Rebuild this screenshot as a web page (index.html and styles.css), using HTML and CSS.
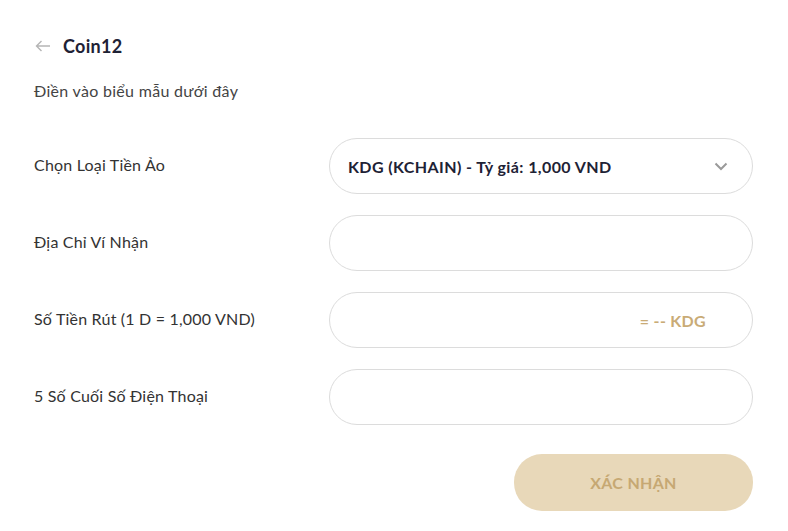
FILE: index.html
```html
<!DOCTYPE html>
<html lang="vi">
<head>
  <meta charset="UTF-8">
  <meta name="viewport" content="width=device-width, initial-scale=1">
  <title>Coin12</title>
  <link rel="stylesheet" href="styles.css">
</head>
<body>
  <div class="page">
    <div class="header">
      <span class="back">
        <svg width="16" height="12" viewBox="0 0 16 12" fill="none" stroke="#b5b5b5" stroke-width="1.4">
          <path d="M15 6H1.5M6.5 1L1.5 6l5 5"/>
        </svg>
      </span>
      <h1>Coin12</h1>
    </div>
    <p class="intro">Điền vào biểu mẫu dưới đây</p>

    <form class="form">
      <div class="row">
        <label>Chọn Loại Tiền Ảo</label>
        <div class="field select">
          <span class="value">KDG (KCHAIN) - Tỷ giá: 1,000 VND</span>
          <svg width="14" height="9" viewBox="0 0 14 9" fill="none" stroke="#9a9a9a" stroke-width="2">
            <path d="M1.5 1.5l5.5 5.5 5.5-5.5"/>
          </svg>
        </div>
      </div>
      <div class="row">
        <label>Địa Chỉ Ví Nhận</label>
        <div class="field"></div>
      </div>
      <div class="row">
        <label>Số Tiền Rút (1 D = 1,000 VND)</label>
        <div class="field amount">
          <span class="convert">= -- KDG</span>
        </div>
      </div>
      <div class="row">
        <label>5 Số Cuối Số Điện Thoại</label>
        <div class="field"></div>
      </div>
      <div class="actions">
        <button type="button" class="submit" disabled>XÁC NHẬN</button>
      </div>
    </form>
  </div>
</body>
</html>
```

FILE: styles.css
```css
* { box-sizing: border-box; }
body {
  margin: 0;
  background: #fff;
  font-family: Lato, 'Liberation Sans', sans-serif;
  color: #333;
  letter-spacing: 0.3px;
}
.page {
  padding: 33px 35px 0 34px;
}
.header {
  display: flex;
  align-items: center;
  height: 26px;
}
.back {
  display: flex;
  width: 29px;
  padding-left: 1px;
}
h1 {
  margin: 0;
  font-size: 18px;
  font-weight: 700;
  color: #1e2235;
}
.intro {
  margin: 22px 0 0;
  font-size: 16px;
  color: #444;
}
.form {
  margin-top: 38px;
  display: flex;
  flex-direction: column;
  gap: 21px;
}
.row {
  display: flex;
  align-items: center;
}
.row label {
  width: 295px;
  padding-bottom: 4px;
  font-size: 16px;
  color: #333;
  letter-spacing: 0.2px;
}
.field {
  flex: 1;
  height: 56px;
  border: 1px solid #dcdcdc;
  border-radius: 28px;
  display: flex;
  align-items: center;
  padding: 0 24px 0 18px;
}
.select {
  justify-content: space-between;
}
.select .value {
  font-size: 16px;
  font-weight: 700;
  color: #1e2235;
  letter-spacing: 0.4px;
}
.amount {
  justify-content: flex-end;
  padding-right: 46px;
}
.convert {
  font-size: 16px;
  font-weight: 700;
  color: #c9ab76;
}
.actions {
  display: flex;
  justify-content: flex-end;
  margin-top: 8px;
}
.submit {
  width: 239px;
  height: 57px;
  border: none;
  border-radius: 28px;
  background: #e8d8b9;
  color: #c6a873;
  font-family: inherit;
  font-size: 16px;
  font-weight: 700;
  letter-spacing: 0.3px;
}
```
